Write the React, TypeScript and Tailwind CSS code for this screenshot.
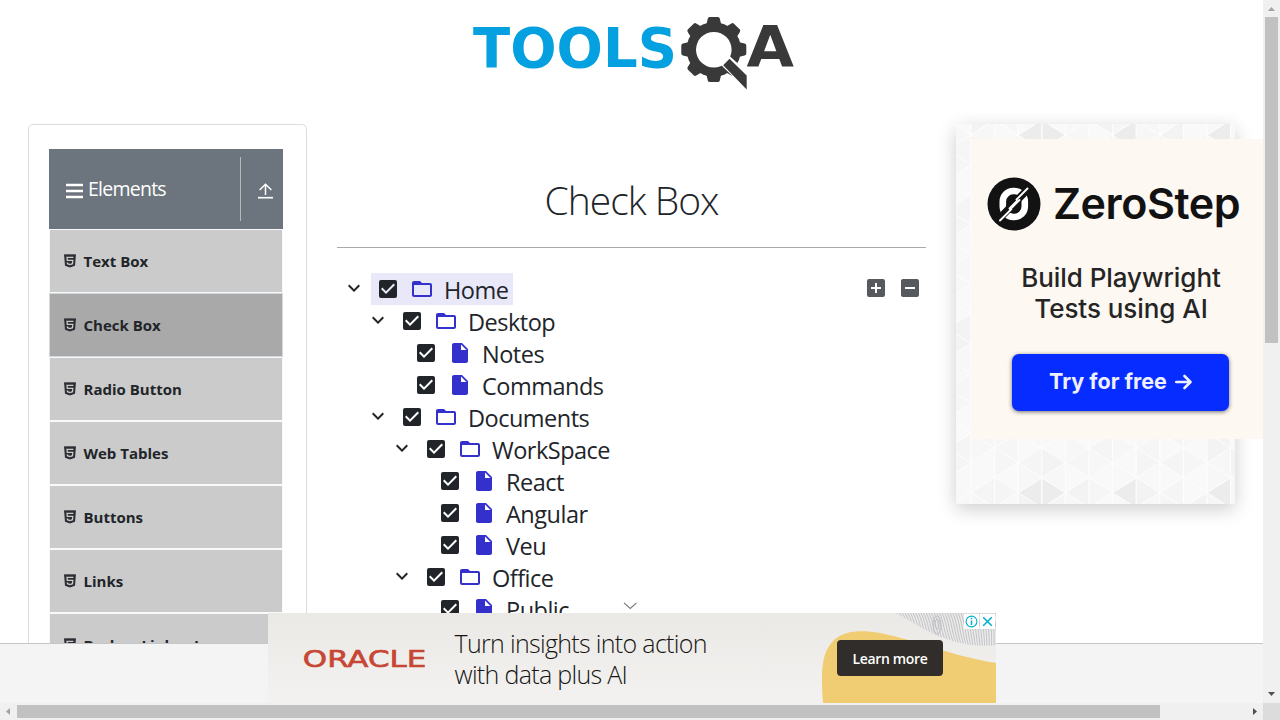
import React from "react";
import {
  MdAddBox,
  MdCheckBox,
  MdFolderOpen,
  MdIndeterminateCheckBox,
  MdInsertDriveFile,
  MdKeyboardArrowDown,
} from "react-icons/md";

const menuItems = [
  { label: "Text Box" },
  { label: "Check Box", active: true },
  { label: "Radio Button" },
  { label: "Web Tables" },
  { label: "Buttons" },
  { label: "Links" },
  { label: "Broken Links - Images" },
];

type TreeNode = { label: string; pad: string; folder?: boolean; selected?: boolean };

const tree: TreeNode[] = [
  { label: "Home", pad: "pl-[5px]", folder: true, selected: true },
  { label: "Desktop", pad: "pl-[29px]", folder: true },
  { label: "Notes", pad: "pl-[72px]" },
  { label: "Commands", pad: "pl-[72px]" },
  { label: "Documents", pad: "pl-[29px]", folder: true },
  { label: "WorkSpace", pad: "pl-[53px]", folder: true },
  { label: "React", pad: "pl-[96px]" },
  { label: "Angular", pad: "pl-[96px]" },
  { label: "Veu", pad: "pl-[96px]" },
  { label: "Office", pad: "pl-[53px]", folder: true },
  { label: "Public", pad: "pl-[96px]" },
];

function Logo() {
  return (
    <svg width="350" height="110" viewBox="0 0 350 110" className="block">
      <text
        x="13"
        y="67.3"
        fontSize="55.5"
        fontWeight="700"
        fontFamily="DejaVu Sans, sans-serif"
        textLength="204"
        lengthAdjust="spacingAndGlyphs"
        fill="#05a0df"
      >
        TOOLS
      </text>
      <g fill="#393939">
        {[0, 45, 90, 135, 180, 225, 270, 315].map((a) => (
          <path
            key={a}
            transform={`rotate(${a} 253.8 49.5)`}
            d="M246.3 25 L247.8 18.6 Q248.1 17 249.8 17 H257.8 Q259.5 17 259.8 18.6 L261.3 25Z"
          />
        ))}
        <path
          fillRule="evenodd"
          d="M253.8 22.3a27.2 27.2 0 1 0 0 54.4a27.2 27.2 0 1 0 0-54.4ZM253.8 31.9a17.8 17.8 0 1 1 0 35.6a17.8 17.8 0 1 1 0-35.6Z"
        />
      </g>
      <path d="M269 55.5 L295 79 V98 L260 64Z" fill="#fff" />
      <path d="M269.5 58.8 L286.7 75.5 V89.5 L263.2 65.2Z" fill="#393939" />
      <text
        x="286.5"
        y="67.3"
        fontSize="56.5"
        fontWeight="700"
        fontFamily="DejaVu Sans, sans-serif"
        textLength="47.5"
        lengthAdjust="spacingAndGlyphs"
        fill="#393939"
      >
        A
      </text>
    </svg>
  );
}

function Html5Icon() {
  return (
    <svg width="12" height="14" viewBox="0 0 12 14" className="block shrink-0">
      <path d="M0 0H12L11 11.8L6 13.6L1 11.8Z" fill="#2b2f33" />
      <path d="M0 0H12V1H0Z" fill="#5d6063" />
      <path d="M9.4 3.3H3L3.25 6.4H8.8L8.5 9.7L6 10.5L3.5 9.7L3.4 8.4" fill="none" stroke="#cbcbcb" strokeWidth="1.25" />
    </svg>
  );
}

function Sidebar() {
  return (
    <aside className="h-[700px] w-[279px] shrink-0 rounded-[5px] border border-[#dcdcdc] px-5 pt-6">
      <div className="flex h-20 w-[234px] items-center bg-[#6c757d] text-white">
        <svg width="17" height="16" viewBox="0 0 17 16" className="mt-[3px] ml-[17px] block shrink-0">
          <path d="M0 2H17M0 8H17M0 14H17" stroke="#fff" strokeWidth="2.6" />
        </svg>
        <span className="ml-[5px] w-[152px] pb-px text-[19.5px] tracking-[-0.75px]">Elements</span>
        <span className="h-16 w-px shrink-0 bg-[#b9b6b3]" />
        <svg width="15" height="16" viewBox="0 0 15 16" className="mt-[4px] ml-[17px] block shrink-0" fill="none" stroke="#fff">
          <path d="M7.5 12V1.2M1.6 7L7.5 1.2L13.4 7" strokeWidth="1.5" />
          <path d="M0 14.7H15" strokeWidth="1.7" />
        </svg>
      </div>
      <ul className="w-[234px]">
        {menuItems.map((item) => (
          <li
            key={item.label}
            className={
              item.active
                ? "flex h-16 items-center border border-[#d3d8dc] bg-[#a9a9a9] pl-[14px]"
                : "flex h-16 items-center border border-[#f8f9fa] bg-[#cbcbcb] pl-[14px]"
            }
          >
            <Html5Icon />
            <span className="ml-[7.5px] text-[15px] font-bold whitespace-nowrap">{item.label}</span>
          </li>
        ))}
      </ul>
    </aside>
  );
}

function TreeRow({ node }: { node: TreeNode }) {
  return (
    <li className={`flex h-8 items-start ${node.pad}`}>
      {node.folder && <MdKeyboardArrowDown className="mt-[3px] mr-[5px] size-6 shrink-0" />}
      <span
        className={
          node.selected
            ? "flex h-8 w-[142px] items-start bg-[#e9e8f9] pl-[5px]"
            : "flex h-8 items-start pl-[5px]"
        }
      >
        <MdCheckBox className="mt-1 size-6 shrink-0" />
        {node.folder ? (
          <MdFolderOpen className="mt-1 ml-[10px] size-6 shrink-0 text-[#3330cb]" />
        ) : (
          <MdInsertDriveFile className="mt-1 ml-[10px] size-6 shrink-0 text-[#3330cb]" />
        )}
        <span className="ml-[10px] text-[23.5px] leading-[34px] tracking-[-0.5px] whitespace-nowrap">{node.label}</span>
      </span>
    </li>
  );
}

function CheckBoxPanel() {
  return (
    <main className="ml-[30px] w-[589px] shrink-0">
      <h1 className="flex h-[124px] items-center justify-center border-b border-[#a9a9a9] pt-[29px] text-[39px] font-light tracking-[-1px]">
        Check Box
      </h1>
      <div className="flex justify-between pt-[25px]">
        <ul>
          {tree.map((node) => (
            <TreeRow key={node.label} node={node} />
          ))}
        </ul>
        <div className="mt-[3px] mr-[4px] flex h-6 gap-[10px] text-[#56595d]">
          <MdAddBox className="size-6" />
          <MdIndeterminateCheckBox className="size-6" />
        </div>
      </div>
    </main>
  );
}

const shades = ["#f7f7f7", "#f5f5f5", "#f9f9f9", "#f6f6f6", "#f8f8f8", "#f3f3f3", "#f9f9f9", "#f7f7f7"];

function TrianglePattern() {
  const dx = 23.6;
  const dy = 29.8;
  const triangles: React.ReactNode[] = [];
  for (let c = -1; c < 13; c++) {
    const x = 15 - dx + c * dx;
    for (let r = -2; r < 15; r++) {
      const left = 11 + r * dy - (Math.abs(c) % 2 === 0 ? dy / 2 : 0);
      const s = Math.abs(c * 5 + r * 3 + ((c * r * 7) % 11));
      triangles.push(
        <path
          key={`a${c}-${r}`}
          d={`M${x} ${left}V${left + dy}L${x + dx} ${left + dy / 2}Z`}
          fill={shades[s % 8]}
        />,
        <path
          key={`b${c}-${r}`}
          d={`M${x} ${left + dy}L${x + dx} ${left + dy / 2}V${left + dy * 1.5}Z`}
          fill={shades[(s + 3) % 8]}
        />,
      );
    }
  }
  return (
    <svg width="280" height="380" viewBox="0 0 280 380" className="col-start-1 row-start-1 block" stroke="#fdfdfd" strokeWidth="1">
      {triangles}
      <g fill="#ececec">
        <path d="M62.2 368.8L85.8 353.9V383.7ZM85.8 353.9L109.4 368.8L85.8 383.7Z" />
        <path d="M156.6 368.8L180.2 353.9V383.7ZM251 368.8L274.6 353.9V383.7Z" />
        <path d="M62.2 11L85.8 -4V26ZM85.8 -4L109.4 11L85.8 26Z" />
        <path d="M156.6 11L180.2 -4V26ZM251 11L274.6 -4V26Z" />
      </g>
    </svg>
  );
}

function SideAd() {
  return (
    <aside className="ml-[30px] grid h-[380px] w-[279px] shrink-0 bg-[#f7f7f7] shadow-[0_5px_18px_rgba(0,0,0,0.2)]">
      <div className="col-start-1 row-start-1 h-[380px] w-[279px] overflow-hidden">
        <TrianglePattern />
      </div>
      <div className="relative col-start-1 row-start-1 mt-[15px] ml-[15px] h-[300px] w-[300px] bg-[#fdf8f2] font-[Inter,sans-serif] text-[#252525]">
        <div className="flex h-[130px] items-center pl-[16px]">
          <svg width="54" height="54" viewBox="0 0 54 54" className="block shrink-0">
            <circle cx="27" cy="27" r="26.5" fill="#121212" />
            <rect x="15.8" y="14" width="22" height="26" rx="10.5" fill="none" stroke="#fff" strokeWidth="6.6" />
            <path d="M9 45L44 9" stroke="#121212" strokeWidth="7.5" />
            <path d="M13 43.5L24.5 32M29.5 22.5L40.5 11.5M22.5 31.5L30 24M25.5 30L32.5 23" stroke="#fff" strokeWidth="1.9" strokeLinecap="round" />
          </svg>
          <span className="ml-[12px] pb-px text-[43px] leading-none font-semibold tracking-[-0.45px] text-[#121212]">ZeroStep</span>
        </div>
        <p className="mt-[-7px] w-[300px] text-center text-[26px] leading-[31px] font-medium tracking-[-0.05px]">
          Build Playwright
          <br />
          Tests using AI
        </p>
        <div className="mt-[30px] ml-[41px] flex h-[57px] w-[217px] items-center justify-center rounded-[7px] bg-[#062cff] pb-[2px] text-[21.5px] font-bold text-[#eef0ff] shadow-[0_1px_4px_rgba(0,0,0,0.55)]">
          <span className="whitespace-nowrap">Try for free</span>
          <svg width="17" height="16" viewBox="0 0 17 16" className="ml-[8px] block" fill="none" stroke="currentColor" strokeWidth="2.6" strokeLinecap="round" strokeLinejoin="round">
            <path d="M1.2 8H15.3M9.5 2L15.5 8L9.5 14" />
          </svg>
        </div>
      </div>
    </aside>
  );
}

function BottomAd() {
  const grain = Array.from({ length: 42 }, (_, i) => i);
  return (
    <div className="absolute top-[613px] left-[268px] grid h-[90px] w-[728px] overflow-hidden bg-linear-to-b from-[#ebe9e6] to-[#f3f2f0]">
      <svg width="728" height="90" viewBox="0 0 728 90" className="col-start-1 row-start-1 block">
        <defs>
          <clipPath id="wood">
            <path d="M628 0C648 11 661 20 676 25C692 31 708 34 728 32V0Z" />
          </clipPath>
        </defs>
        <path d="M555 90C553 58 553 40 566 27C577 17 594 17 612 20C648 27 680 42 728 50V90Z" fill="#f0cc72" />
        <g clipPath="url(#wood)" fill="none" stroke="#b4b7c0" strokeWidth="0.8">
          {grain.map((i) => (
            <path
              key={i}
              d={`M${622 + i * 2.7} -2C${632 + i * 2.5} 10 ${624 + i * 2.8} 18 ${644 + i * 2.2} 36`}
            />
          ))}
          <ellipse cx="669" cy="11" rx="2" ry="5" />
          <ellipse cx="669" cy="12" rx="4" ry="9" />
        </g>
        <text
          x="34.8"
          y="53.8"
          fontFamily="DejaVu Sans, sans-serif"
          fontSize="22.6"
          textLength="123.5"
          lengthAdjust="spacingAndGlyphs"
          fill="#c74634"
          stroke="#c74634"
          strokeWidth="0.6"
        >
          ORACLE
        </text>
      </svg>
      <div className="col-start-1 row-start-1 flex items-start">
        <p className="mt-[15px] ml-[186.5px] w-[382.5px] text-[25px] leading-[31px] font-light tracking-[-0.68px] text-[#161513]">
          Turn insights into action
          <br />
          with data plus AI
        </p>
        <button className="mt-[27px] h-[36px] w-[106px] rounded-[4px] bg-[#312d2a] text-[14px] font-semibold tracking-[-0.35px] whitespace-nowrap text-white">
          Learn more
        </button>
      </div>
      <div className="absolute top-[1px] right-[1px] flex gap-px">
        <svg width="15" height="15" viewBox="0 0 15 15" className="block bg-white" fill="none" stroke="#00aecd">
          <circle cx="7.5" cy="7.5" r="5.4" strokeWidth="1.1" />
          <path d="M7.5 6.4V11M7.5 3.8V5.2" strokeWidth="1.5" />
        </svg>
        <svg width="15" height="15" viewBox="0 0 15 15" className="block bg-white" fill="none" stroke="#00aecd">
          <path d="M3.2 3.2L11.8 11.8M11.8 3.2L3.2 11.8" strokeWidth="1.5" />
        </svg>
      </div>
    </div>
  );
}

function Arrow({ d, fill }: { d: string; fill: string }) {
  return (
    <svg width="17" height="17" viewBox="0 0 17 17" className="block shrink-0">
      <path d={d} fill={fill} />
    </svg>
  );
}

export default function App() {
  return (
    <div className="grid h-[720px] w-[1280px] grid-cols-[1263px_17px] grid-rows-[703px_17px] overflow-hidden bg-white font-['Open_Sans',sans-serif] text-[#212529]">
      <div className="relative h-[703px] overflow-hidden">
        <header className="flex h-[124px] items-start pl-[460px]">
          <Logo />
        </header>
        <div className="flex items-start pl-7">
          <Sidebar />
          <CheckBoxPanel />
          <SideAd />
        </div>
        <div className="absolute top-[643px] left-0 h-[60px] w-full border-t border-[#c6c6c6] bg-[#f4f4f4]" />
        <svg width="14" height="8" viewBox="0 0 14 8" className="absolute top-[602px] left-[623px]" fill="none" stroke="#777" strokeWidth="1.1">
          <path d="M1 0.8L7.3 6.4L13.5 0.8" />
        </svg>
        <BottomAd />
      </div>
      <div className="flex flex-col items-center bg-[#f0f0f0]">
        <Arrow d="M8.5 7L12 11H5Z" fill="#a3a3a3" />
        <div className="h-[326px] w-[13px] bg-[#c1c1c1]" />
        <div className="flex-1" />
        <Arrow d="M5 6H12L8.5 10Z" fill="#505050" />
      </div>
      <div className="flex items-center bg-[#f0f0f0]">
        <Arrow d="M6 8.5L10 5V12Z" fill="#a3a3a3" />
        <div className="h-[13px] w-[1143px] bg-[#c1c1c1]" />
        <div className="flex-1" />
        <Arrow d="M7 5L11 8.5L7 12Z" fill="#505050" />
      </div>
      <div className="bg-[#dcdcdc]" />
    </div>
  );
}
